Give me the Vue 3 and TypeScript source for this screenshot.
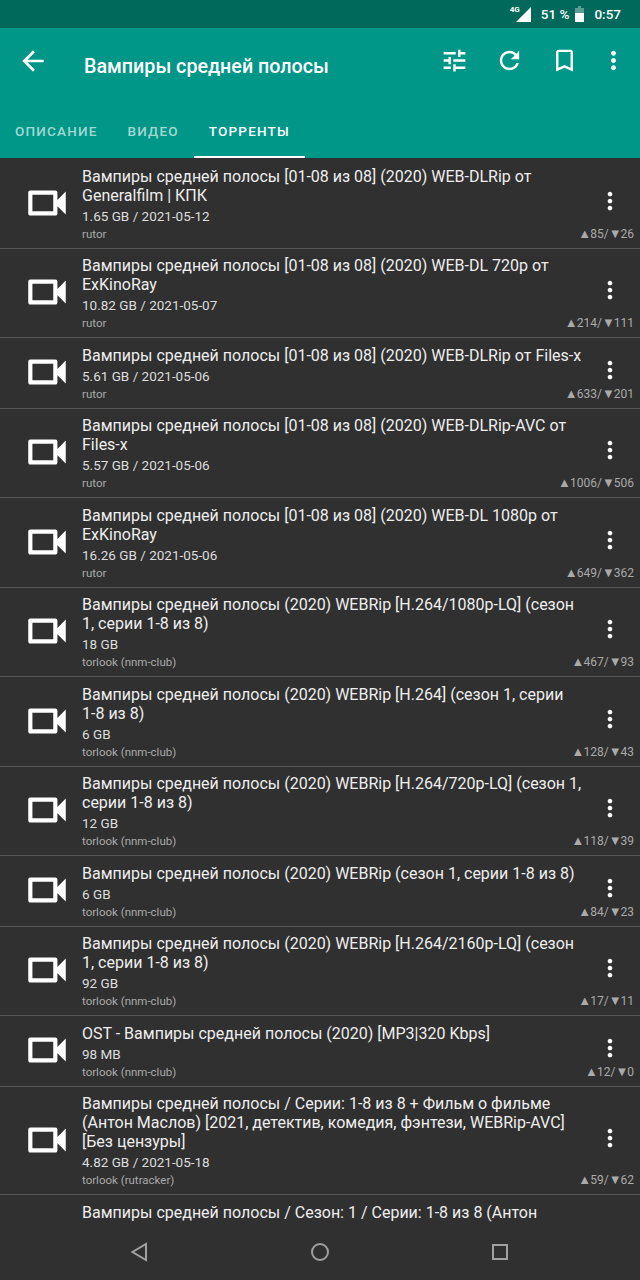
<template>
  <div class="screen">
    <header class="appbar">
      <div class="status">
        <span class="net">4G</span>
        <svg class="signal" width="15" height="15" viewBox="0 0 15 15"><path d="M15 0v15H0z" fill="#fff" /></svg>
        <span class="status-text pct">51 %</span>
        <svg class="battery" width="9" height="16" viewBox="0 0 9 16">
          <path d="M3 0h3v2h3v5H0V2h3z" fill="#fff" fill-opacity=".35" />
          <rect y="7" width="9" height="9" fill="#fff" />
        </svg>
        <span class="status-text">0:57</span>
      </div>
      <div class="toolbar">
        <svg class="back" width="32" height="32" viewBox="0 0 24 24"><path d="M20 11H7.830l5.590-5.590L12 4l-8 8 8 8 1.410-1.410L7.830 13H20v-2z" /></svg>
        <h1 class="title">Вампиры средней полосы</h1>
        <div class="actions">
          <svg width="29" height="29" viewBox="0 0 24 24"><path d="M3 17v2h6v-2H3zM3 5v2h10V5H3zm10 16v-2h8v-2h-8v-2h-2v6h2zM7 9v2H3v2h4v2h2V9H7zm14 4v-2H11v2h10zm-6-4h2V7h4V5h-4V3h-2v6z" /></svg>
          <svg width="29" height="29" viewBox="0 0 24 24"><path d="M17.650 6.350C16.200 4.900 14.210 4 12 4c-4.420 0-7.990 3.580-7.990 8s3.570 8 7.990 8c3.730 0 6.840-2.550 7.730-6h-2.080c-.82 2.330-3.040 4-5.650 4-3.310 0-6-2.690-6-6s2.690-6 6-6c1.660 0 3.140.69 4.220 1.780L13 11h7V4l-2.350 2.350z" /></svg>
          <svg width="29" height="29" viewBox="0 0 24 24"><path d="M17 3H7c-1.100 0-1.990.9-1.990 2L5 21l7-3 7 3V5c0-1.100-.9-2-2-2zm0 15l-5-2.180L7 18V5h10v13z" /></svg>
          <svg width="29" height="29" viewBox="0 0 24 24"><path d="M12 8c1.100 0 2-.9 2-2s-.9-2-2-2-2 .9-2 2 .9 2 2 2zm0 2c-1.100 0-2 .9-2 2s.9 2 2 2 2-.9 2-2-.9-2-2-2zm0 6c-1.100 0-2 .9-2 2s.9 2 2 2 2-.9 2-2-.9-2-2-2z" /></svg>
        </div>
      </div>
      <nav class="tabs">
        <span v-for="tab in tabs" :key="tab" class="tab" :class="{ active: tab === 'Торренты' }">{{ tab }}</span>
      </nav>
    </header>

    <main class="list">
      <article v-for="(item, i) in torrents" :key="i" class="row">
        <svg class="cam" width="50" height="50" viewBox="0 0 24 24"><path d="M15 8v8H5V8h10m1-2H4c-.55 0-1 .45-1 1v10c0 .55.45 1 1 1h12c.55 0 1-.45 1-1v-3.500l4 4v-11l-4 4V7c0-.55-.45-1-1-1z" /></svg>
        <div class="info">
          <div class="name">{{ item.name }}</div>
          <div class="size">{{ item.size }}</div>
          <div class="source">{{ item.source }}</div>
        </div>
        <svg class="more" width="28" height="28" viewBox="0 0 24 24"><path d="M12 8c1.100 0 2-.9 2-2s-.9-2-2-2-2 .9-2 2 .9 2 2 2zm0 2c-1.100 0-2 .9-2 2s.9 2 2 2 2-.9 2-2-.9-2-2-2zm0 6c-1.100 0-2 .9-2 2s.9 2 2 2 2-.9 2-2-.9-2-2-2z" /></svg>
        <div class="seeds"><span class="arrow">▲</span>{{ item.up }}/<span class="arrow">▼</span>{{ item.down }}</div>
      </article>
    </main>

    <footer class="navbar">
      <svg width="24" height="24" viewBox="0 0 24 24"><path d="M19 4v16L5.500 12z" /></svg>
      <svg width="24" height="24" viewBox="0 0 24 24"><circle cx="12" cy="12" r="8" /></svg>
      <svg class="recents" width="24" height="24" viewBox="0 0 24 24"><rect x="5" y="5" width="14" height="14" /></svg>
    </footer>
  </div>
</template>

<script setup lang="ts">
interface Torrent {
  name: string;
  size: string;
  source: string;
  up: number;
  down: number;
}

const tabs = ['Описание', 'Видео', 'Торренты'];

const torrents: Torrent[] = [
  { name: 'Вампиры средней полосы [01-08 из 08] (2020) WEB-DLRip от Generalfilm | КПК', size: '1.65 GB / 2021-05-12', source: 'rutor', up: 85, down: 26 },
  { name: 'Вампиры средней полосы [01-08 из 08] (2020) WEB-DL 720p от ExKinoRay', size: '10.82 GB / 2021-05-07', source: 'rutor', up: 214, down: 111 },
  { name: 'Вампиры средней полосы [01-08 из 08] (2020) WEB-DLRip от Files-x', size: '5.61 GB / 2021-05-06', source: 'rutor', up: 633, down: 201 },
  { name: 'Вампиры средней полосы [01-08 из 08] (2020) WEB-DLRip-AVC от Files-x', size: '5.57 GB / 2021-05-06', source: 'rutor', up: 1006, down: 506 },
  { name: 'Вампиры средней полосы [01-08 из 08] (2020) WEB-DL 1080p от ExKinoRay', size: '16.26 GB / 2021-05-06', source: 'rutor', up: 649, down: 362 },
  { name: 'Вампиры средней полосы (2020) WEBRip [H.264/1080p-LQ] (сезон 1, серии 1-8 из 8)', size: '18 GB', source: 'torlook (nnm-club)', up: 467, down: 93 },
  // word joiner keeps "1-8" together, as in the app
  { name: 'Вампиры средней полосы (2020) WEBRip [H.264] (сезон 1, серии 1-\u20608 из 8)', size: '6 GB', source: 'torlook (nnm-club)', up: 128, down: 43 },
  { name: 'Вампиры средней полосы (2020) WEBRip [H.264/720p-LQ] (сезон 1, серии 1-8 из 8)', size: '12 GB', source: 'torlook (nnm-club)', up: 118, down: 39 },
  { name: 'Вампиры средней полосы (2020) WEBRip (сезон 1, серии 1-8 из 8)', size: '6 GB', source: 'torlook (nnm-club)', up: 84, down: 23 },
  { name: 'Вампиры средней полосы (2020) WEBRip [H.264/2160p-LQ] (сезон 1, серии 1-8 из 8)', size: '92 GB', source: 'torlook (nnm-club)', up: 17, down: 11 },
  { name: 'OST - Вампиры средней полосы (2020) [MP3|320 Kbps]', size: '98 MB', source: 'torlook (nnm-club)', up: 12, down: 0 },
  { name: 'Вампиры средней полосы / Серии: 1-8 из 8 + Фильм о фильме (Антон Маслов) [2021, детектив, комедия, фэнтези, WEBRip-AVC] [Без цензуры]', size: '4.82 GB / 2021-05-18', source: 'torlook (rutracker)', up: 59, down: 62 },
  { name: 'Вампиры средней полосы / Сезон: 1 / Серии: 1-8 из 8 (Антон Маслов) [2021, детектив, комедия, фэнтези, WEB-DL 1080p] [Без цензуры]', size: '4.82 GB / 2021-05-18', source: 'torlook (rutracker)', up: 59, down: 62 },
];
</script>

<style>
html,
body {
  background: #303030;
}
</style>

<style scoped>
.screen {
  width: 640px;
  height: 1280px;
  display: flex;
  flex-direction: column;
  overflow: hidden;
  background: #303030;
  font-family: Roboto, sans-serif;
  color: #fff;
}

.appbar {
  background: #009688;
  flex: none;
}

.status {
  height: 28px;
  background: #00695c;
  display: flex;
  align-items: center;
  justify-content: flex-end;
  padding-right: 19px;
}

.status-text {
  font-size: 13.500px;
  font-weight: 500;
}

.net {
  font-size: 8px;
  font-weight: 700;
  align-self: flex-start;
  margin: 5px -4px 0 0;
  position: relative;
}

.signal {
  margin-top: 1px;
}

.pct {
  margin: 0 6px 0 10px;
}

.battery {
  margin-right: 10px;
}

.toolbar {
  height: 76px;
  display: flex;
  align-items: flex-start;
}

.back {
  fill: #fff;
  margin: 17px 0 0 17px;
}

.title {
  margin: 27px 0 0 35px;
  font-size: 19.700px;
  line-height: 24px;
  font-weight: 500;
  flex: 1;
}

.actions {
  display: flex;
  gap: 26px;
  margin: 18px 12px 0 0;
}

.actions svg {
  fill: #fff;
}

.actions svg:last-child {
  margin-left: -6px;
}

.tabs {
  height: 54px;
  display: flex;
}

.tab {
  padding: 0 15px;
  line-height: 54px;
  font-size: 13.500px;
  font-weight: 500;
  letter-spacing: 1.200px;
  text-transform: uppercase;
  color: rgba(255, 255, 255, 0.65);
  border-bottom: 2px solid transparent;
  box-sizing: border-box;
}

.tab.active {
  color: #fff;
  border-bottom-color: #fff;
}

.list {
  flex: 1;
  min-height: 0;
  overflow: hidden;
  padding-top: 1px;
}

.row {
  display: grid;
  grid-template-columns: 82px minmax(0, 1fr) 46px;
  grid-template-rows: 1fr auto;
  padding: 7.500px 6px 6px 0;
  border-bottom: 1px solid #565656;
}

.cam {
  grid-column: 1;
  grid-row: 1 / 3;
  align-self: center;
  margin: -8px 0 -5px 22px;
  fill: #fff;
}

.info {
  grid-column: 2;
  grid-row: 1 / 3;
  min-width: 0;
}

.name {
  font-size: 16px;
  line-height: 19px;
  color: #eee;
}

.size {
  font-size: 13.500px;
  line-height: 21px;
  margin-top: 1px;
  color: #ddd;
}

.source {
  font-size: 11.500px;
  line-height: 15px;
  color: #aaa;
}

.more {
  grid-column: 3;
  grid-row: 1;
  align-self: center;
  justify-self: center;
  fill: #fff;
  margin: 8px 2px 0 0;
}

.seeds {
  grid-column: 2 / 4;
  grid-row: 2;
  justify-self: end;
  font-size: 12px;
  line-height: 15px;
  color: #aaa;
}

.arrow {
  font-size: 13px;
  line-height: 1;
  margin-right: -1px;
}

.navbar {
  height: 58px;
  flex: none;
  box-sizing: border-box;
  padding-top: 2px;
  background: #303030;
  display: flex;
  align-items: center;
  justify-content: center;
  gap: 157px;
}

.navbar svg {
  fill: none;
  stroke: #a0a0a0;
  stroke-width: 2;
}

.navbar .recents {
  margin-left: -1px;
  margin-right: 1px;
}
</style>
